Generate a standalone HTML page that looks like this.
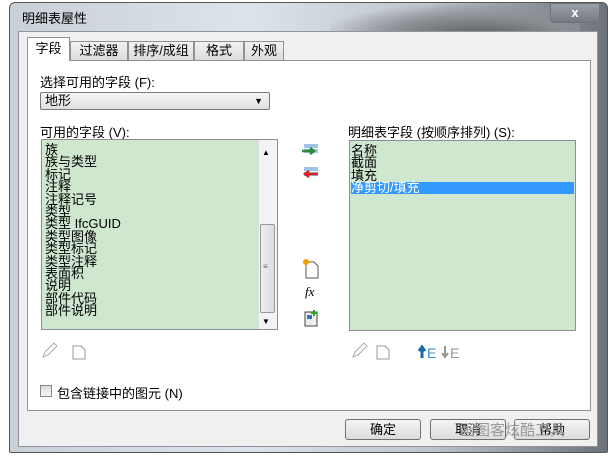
<!DOCTYPE html>
<html><head><meta charset="utf-8"><style>
*{margin:0;padding:0;box-sizing:border-box}
body{width:615px;height:458px;background:#fff;position:relative;overflow:hidden;font-family:"Liberation Sans","Noto Sans CJK SC","WenQuanYi Zen Hei",sans-serif;font-size:12px;color:#000}
.abs{position:absolute}
#frame{left:9px;top:2px;width:599px;height:451px;border:1px solid #555;border-radius:6px 6px 2px 2px;background:linear-gradient(90deg,#c9d0d8 0%,#dde3ea 40%,#bfc5cc 70%,#6d7278 100%)}
#glare{left:330px;top:4px;width:250px;height:30px;background:radial-gradient(ellipse at 60% 100%,#5e6266 0%,#8a8f94 40%,rgba(200,205,210,0) 75%)}
#client{left:18px;top:31px;width:580px;height:416px;background:#f0f0f0;border:1px solid #8f959b}
#panel{left:27px;top:60px;width:564px;height:351px;background:#fff;border:1px solid #8d9399}
.tab{top:41px;height:20px;border:1px solid #8d9399;background:linear-gradient(#f2f2f2,#dcdcdc);font-size:13px;line-height:18px;text-align:center}
.lst{background:#cfe6cf;border:1px solid #8a8f94;font-family:"Liberation Sans","WenQuanYi Zen Hei","Noto Sans CJK SC",sans-serif;font-size:13px;line-height:12.4px;padding:4px 3px}
.btn{top:419px;width:76px;height:21px;border:1px solid #707070;border-radius:3px;background:linear-gradient(#f4f4f4,#dcdcdc);text-align:center;line-height:19px;font-size:13px}
</style></head><body>
<div id="frame" class="abs"></div>
<div id="glare" class="abs"></div>
<div class="abs" style="left:22px;top:8px;font-size:13px">明细表屋性</div>
<div class="abs" style="left:550px;top:3px;width:50px;height:20px;border:1px solid #6d7278;border-radius:0 0 4px 4px;background:linear-gradient(#9aa0a6,#747a80);color:#fff;font-weight:bold;text-align:center;line-height:18px;font-size:13px">x</div>
<div id="client" class="abs"></div>
<div id="panel" class="abs"></div>
<div class="tab abs" style="left:27px;top:37px;width:43px;height:24px;background:#fff;border-bottom:none;line-height:22px">字段</div>
<div class="tab abs" style="left:70px;width:58px">过滤器</div>
<div class="tab abs" style="left:128px;width:66px">排序/成组</div>
<div class="tab abs" style="left:194px;width:50px">格式</div>
<div class="tab abs" style="left:244px;width:40px">外观</div>
<div class="abs" style="left:40px;top:72px;font-size:13px">选择可用的字段 (F):</div>
<div class="abs" style="left:40px;top:92px;width:230px;height:18px;border:1px solid #7a7a7a;border-radius:2px;background:linear-gradient(#f6f6f6,#e0e0e0);font-size:13px;line-height:16px;padding-left:4px">地形<span style="position:absolute;right:6px;top:0;font-size:9px">▼</span></div>
<div class="abs" style="left:40px;top:122px;font-size:13px">可用的字段 (V):</div>
<div class="abs" style="left:348px;top:122px;font-size:13px">明细表字段 (按顺序排列) (S):</div>
<div class="lst abs" style="left:41px;top:139px;width:237px;height:191px">族<br>族与类型<br>标记<br>注释<br>注释记号<br>类型<br>类型 IfcGUID<br>类型图像<br>类型标记<br>类型注释<br>表面积<br>说明<br>部件代码<br>部件说明</div>
<div class="abs" style="left:258px;top:140px;width:19px;height:189px;background:#f3f3f3;border-left:1px solid #ddd"></div>
<div class="abs" style="left:262px;top:148px;font-size:8px">▲</div>
<div class="abs" style="left:260px;top:224px;width:15px;height:89px;border:1px solid #999;border-radius:2px;background:linear-gradient(90deg,#eee,#dcdcdc)"></div>
<div class="abs" style="left:263px;top:262px;font-size:8px;color:#666">≡</div>
<div class="abs" style="left:262px;top:317px;font-size:8px">▼</div>
<div class="lst abs" style="left:349px;top:140px;width:227px;height:191px;padding-left:1px">名称<br>截面<br>填充<br><div style="background:#3399ff;color:#fff;margin-right:-2px;height:12px;line-height:12px">净剪切/填充</div></div>
<svg class="abs" style="left:300px;top:140px" width="24" height="200">
<rect x="4" y="4" width="14" height="4" fill="#9dc3e6"/><rect x="4" y="9" width="14" height="4" fill="#9dc3e6"/><path d="M2 11h12M10 8l4 3-4 3" stroke="#2e8b3a" stroke-width="2.5" fill="none"/>
<rect x="4" y="27" width="14" height="4" fill="#9dc3e6"/><rect x="4" y="32" width="14" height="4" fill="#9dc3e6"/><path d="M18 34H5M9 31l-4 3 4 3" stroke="#d22" stroke-width="2.5" fill="none"/>
<path d="M6 122h8l4 4v12H6z" fill="#fff" stroke="#555"/><circle cx="6" cy="122" r="3" fill="#f4a000"/>
<text x="5" y="156" font-family="Liberation Serif" font-style="italic" font-size="13">fx</text>
<rect x="5" y="172" width="12" height="14" fill="#eee" stroke="#444"/><rect x="7" y="175" width="5" height="4" fill="#3a6fc4"/><path d="M14 170v6M11 173h6" stroke="#2a2" stroke-width="2"/>
</svg>
<svg class="abs" style="left:40px;top:340px" width="50" height="20"><path d="M3 17l2-5 9-9 3 3-9 9z" fill="none" stroke="#aaa"/><path d="M33 6h8l4 4v9H33z" fill="#fff" stroke="#999"/></svg>
<svg class="abs" style="left:350px;top:340px" width="120" height="20"><path d="M3 17l2-5 9-9 3 3-9 9z" fill="none" stroke="#aaa"/><path d="M27 6h8l4 4v9H27z" fill="#fff" stroke="#999"/><path d="M72 18V7M69 11l3-4 3 4" stroke="#1e6aa8" stroke-width="3" fill="none"/><text x="77" y="18" fill="#3a8fd0" font-size="14" font-family="Liberation Sans">E</text><path d="M95 6v11M92 13l3 4 3-4" stroke="#999" stroke-width="2" fill="none"/><text x="100" y="18" fill="#999" font-size="14" font-family="Liberation Sans">E</text></svg>
<div class="abs" style="left:40px;top:385px;width:12px;height:12px;border:1px solid #888;background:linear-gradient(#ddd,#f6f6f6)"></div>
<div class="abs" style="left:57px;top:383px;font-size:13px">包含链接中的图元 (N)</div>
<div class="btn abs" style="left:345px">确定</div>
<div class="btn abs" style="left:430px">取消</div>
<div class="btn abs" style="left:514px">帮助</div>
<div class="abs" style="left:460px;top:419px;font-size:15px;color:#999">画图客炫酷工具</div>
</body></html>
